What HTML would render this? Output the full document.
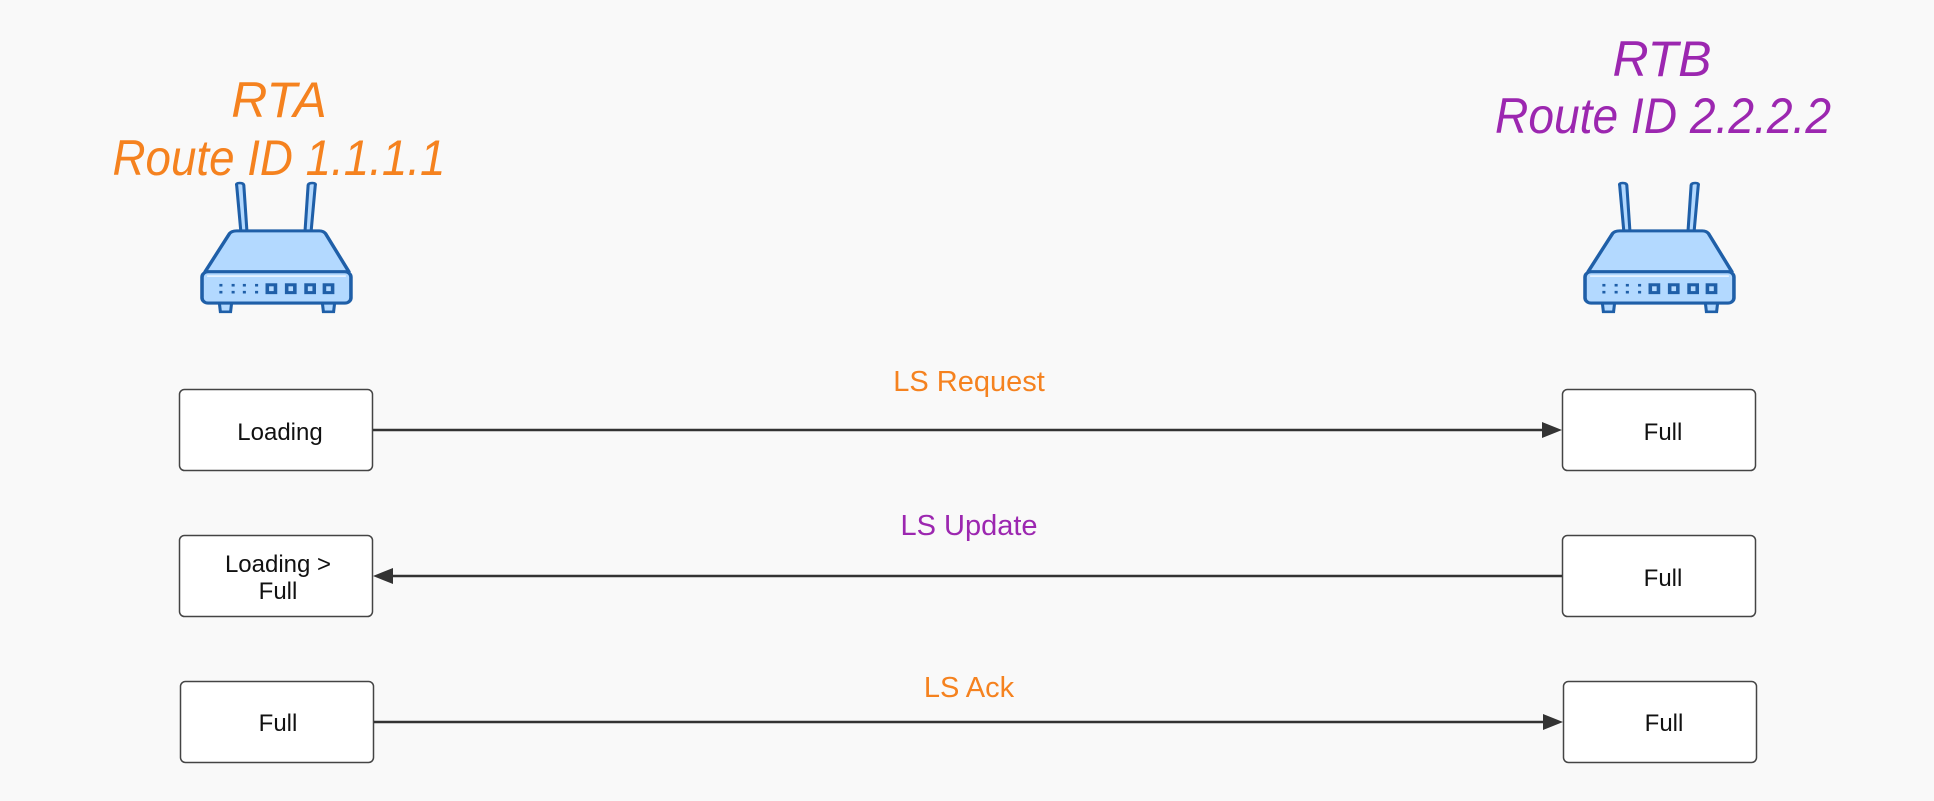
<!DOCTYPE html>
<html><head><meta charset="utf-8"><style>
html,body{margin:0;padding:0;background:#f9f9f9;}
svg{display:block;}
text{font-family:"Liberation Sans",sans-serif;}
</style></head><body>
<svg width="1934" height="801" viewBox="0 0 1934 801" xmlns="http://www.w3.org/2000/svg">
<defs>
<g id="router">
  <path d="M35 3 Q34 0 38 0 Q42 0 42 3 L45 55 L39 55 Z" fill="#b3d9ff" stroke="#1f5fa8" stroke-width="3" stroke-linejoin="round"/>
  <path d="M112 3 Q113 0 109 0 Q105 0 105 3 L102 55 L108 55 Z" fill="#b3d9ff" stroke="#1f5fa8" stroke-width="3" stroke-linejoin="round"/>
  <path d="M35 55 L116 55 Q120 55 122 58 L145 102 L4 102 L28 58 Q30 55 35 55 Z" fill="#b3d9ff" stroke="#1f5fa8" stroke-width="3.5" stroke-linejoin="round"/>
  <path d="M18 138 L30 138 L29 148 L19 148 Z" fill="#b3d9ff" stroke="#1f5fa8" stroke-width="3"/>
  <path d="M119 138 L131 138 L130 148 L120 148 Z" fill="#b3d9ff" stroke="#1f5fa8" stroke-width="3"/>
  <rect x="1" y="102" width="146" height="36" rx="6" fill="#b3d9ff" stroke="#1f5fa8" stroke-width="3.5"/>
  <line x1="6" y1="107" x2="142" y2="107" stroke="#e6f2ff" stroke-width="2"/>
  <g fill="#1f5fa8">
    <rect x="18" y="116" width="3" height="3"/><rect x="18" y="124" width="3" height="3"/>
    <rect x="30" y="116" width="3" height="3"/><rect x="30" y="124" width="3" height="3"/>
    <rect x="41" y="116" width="3" height="3"/><rect x="41" y="124" width="3" height="3"/>
    <rect x="53" y="116" width="3" height="3"/><rect x="53" y="124" width="3" height="3"/>
  </g>
  <g fill="none" stroke="#1f5fa8" stroke-width="3.5">
    <rect x="65" y="117" width="8" height="9"/><rect x="84" y="117" width="8" height="9"/>
    <rect x="103" y="117" width="8" height="9"/><rect x="121" y="117" width="8" height="9"/>
  </g>
</g>
</defs>
<rect width="1934" height="801" fill="#f9f9f9"/>
<g font-style="italic" font-size="50" text-anchor="middle">
<text x="279" y="117" fill="#f5821f">RTA</text>
<text x="279" y="175" fill="#f5821f" textLength="333" lengthAdjust="spacingAndGlyphs">Route ID 1.1.1.1</text>
<text x="1662" y="76" fill="#9c27b0">RTB</text>
<text x="1663" y="133" fill="#9c27b0" textLength="336" lengthAdjust="spacingAndGlyphs">Route ID 2.2.2.2</text>
</g>
<use href="#router" transform="translate(201,183) scale(1.02,0.87)"/>
<use href="#router" transform="translate(1584,183) scale(1.02,0.87)"/>
<g fill="#fff" stroke="#444" stroke-width="1.5">
<rect x="179.5" y="389.5" width="193" height="81" rx="5"/>
<rect x="179.5" y="535.5" width="193" height="81" rx="5"/>
<rect x="180.5" y="681.5" width="193" height="81" rx="5"/>
<rect x="1562.5" y="389.5" width="193" height="81" rx="5"/>
<rect x="1562.5" y="535.5" width="193" height="81" rx="5"/>
<rect x="1563.5" y="681.5" width="193" height="81" rx="5"/>
</g>
<g stroke="#333" stroke-width="2.5">
<line x1="373" y1="430" x2="1545" y2="430"/>
<line x1="392" y1="576" x2="1562" y2="576"/>
<line x1="374" y1="722" x2="1546" y2="722"/>
</g>
<g fill="#333">
<path d="M1562 430 L1542 422 L1542 438 Z"/>
<path d="M373 576 L393 568 L393 584 Z"/>
<path d="M1563 722 L1543 714 L1543 730 Z"/>
</g>
<g font-size="29" text-anchor="middle">
<text x="969" y="391" fill="#f5821f">LS Request</text>
<text x="969" y="535" fill="#9c27b0">LS Update</text>
<text x="969" y="697" fill="#f5821f">LS Ack</text>
</g>
<g font-size="24" text-anchor="middle" fill="#111">
<text x="280" y="440">Loading</text>
<text x="278" y="572">Loading &gt;</text>
<text x="278" y="599">Full</text>
<text x="278" y="731">Full</text>
<text x="1663" y="440">Full</text>
<text x="1663" y="586">Full</text>
<text x="1664" y="731">Full</text>
</g>
</svg>
</body></html>
